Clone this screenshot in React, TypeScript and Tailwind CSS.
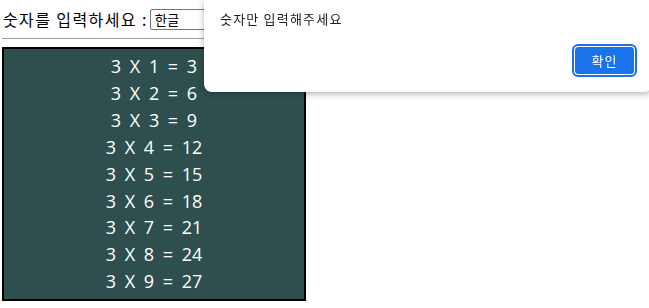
import React from 'react';

const rows = [1, 2, 3, 4, 5, 6, 7, 8, 9];

export default function App() {
  return (
    <div className="relative h-[308px] w-[649px] overflow-hidden bg-white font-['Noto_Sans_CJK_KR',sans-serif] text-black">
      <div className="flex items-center pl-[3px] pt-[9px]">
        <span className="text-[16px] leading-[21px] tracking-[1.4px]">숫자를 입력하세요 :</span>
        <input
          defaultValue="한글"
          className="ml-[2px] h-[21px] w-[170px] rounded-[2px] border border-[#767676] px-[4px] text-[13.3px] leading-[19px] outline-none"
        />
      </div>
      <hr className="mx-[2px] mt-[8px] border-[#a0a0a0]" />
      <div className="mx-[2px] mt-[8px] w-[304px] border-2 border-black bg-[#2f4f4f] py-[4px] text-center font-['Open_Sans','Noto_Sans_CJK_KR',sans-serif] text-[18px] leading-[26.9px] text-white [word-spacing:4px]">
        {rows.map((n) => (
          <div key={n}>
            3 X {n} = {3 * n}
          </div>
        ))}
      </div>

      <div className="fixed left-[204px] top-0 h-[92px] w-[448px] rounded-b-[8px] bg-white shadow-[0_2px_6px_rgba(0,0,0,0.3)]">
        <div className="pl-[16px] pt-[9px] text-[13px] leading-[20px] tracking-[1.2px] text-[#202124]">숫자만 입력해주세요</div>
        <button className="absolute left-[370px] top-[46px] h-[29px] w-[61px] rounded-[4px] border border-white bg-[#1a73e8] text-[13px] tracking-[1px] text-white outline-2 outline-[#1a73e8]">
          확인
        </button>
      </div>
    </div>
  );
}
